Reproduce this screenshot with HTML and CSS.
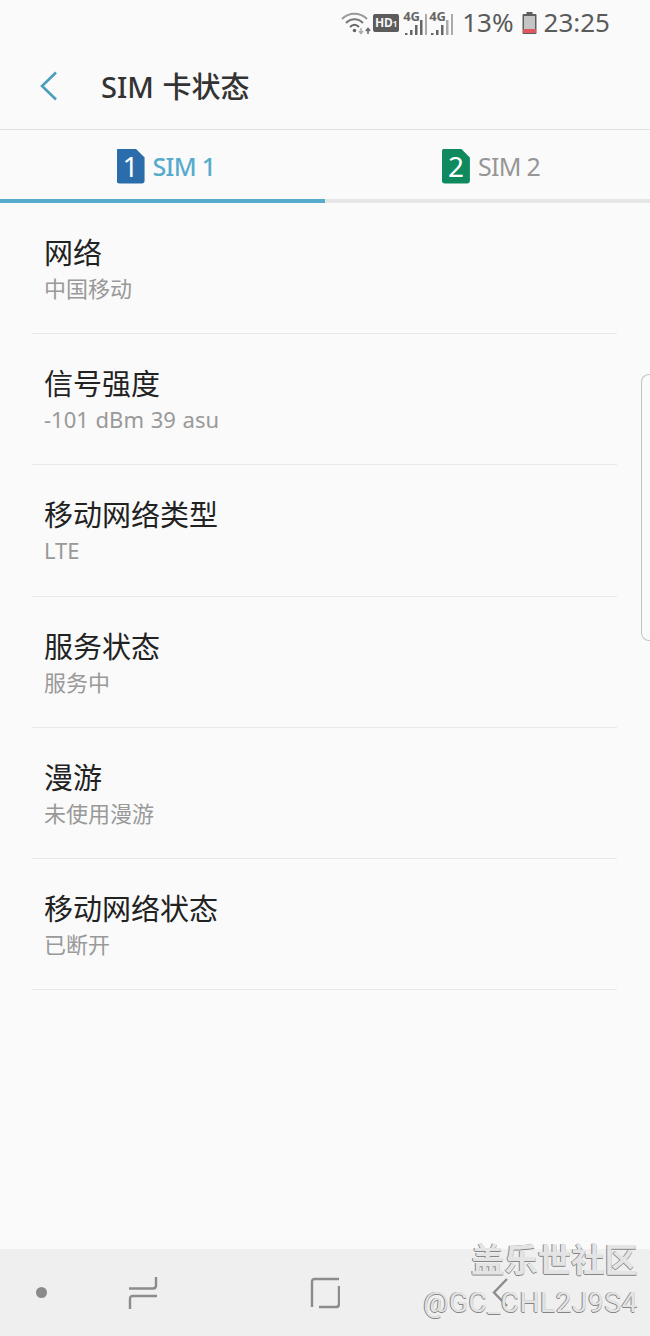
FILE: index.html
```html
<!DOCTYPE html>
<html lang="zh-CN">
<head>
  <meta charset="UTF-8">
  <title>SIM 卡状态</title>
  <link rel="stylesheet" href="styles.css">
</head>
<body>
  <div class="phone">

    <!-- Status bar -->
    <div class="status-bar">
      <svg class="wifi" width="32" height="24" viewBox="0 0 32 24" fill="none">
        <path d="M1 8 C8 1 19 1 26 8" stroke="#999" stroke-width="2"/>
        <path d="M5 12 C10 7 17 7 22 12" stroke="#777" stroke-width="2"/>
        <path d="M9 16 C12 13 15 13 18 16" stroke="#666" stroke-width="2"/>
        <circle cx="13.5" cy="19.5" r="1.8" fill="#666"/>
        <path d="M20 17v5m-2-2l2 2.5 2-2.5" stroke="#aaa" stroke-width="1.5"/>
        <path d="M27 23v-5m-2.2 2l2.2-2.5 2.2 2.5" stroke="#666" stroke-width="1.5"/>
      </svg>
      <span class="hd">HD<small>1</small></span>
      <div class="signal">
        <span class="net">4G</span>
        <svg width="24" height="22" viewBox="0 0 24 22"><path d="M1 20h2.500v2H1zM6 17h2.500v5H6zM11 12h2.500v10H11zM16 7h2.500v15H16z" fill="#666"/><path d="M21 1h2v21h-2z" fill="#aaa"/></svg>
      </div>
      <div class="signal">
        <span class="net">4G</span>
        <svg width="24" height="22" viewBox="0 0 24 22"><path d="M1 20h2.500v2H1zM6 17h2.500v5H6zM11 12h2.500v10H11z" fill="#666"/><path d="M16 7h2.500v15H16zM21 1h2v21h-2z" fill="#aaa"/></svg>
      </div>
      <span class="percent">13%</span>
      <svg class="battery" width="15" height="22" viewBox="0 0 15 22">
        <path d="M4.500 0h6v2h3a1 1 0 0 1 1 1v18a1 1 0 0 1-1 1h-12a1 1 0 0 1-1-1V3a1 1 0 0 1 1-1h3z" fill="#5e5e5e"/>
        <rect x="2" y="4" width="11" height="16" fill="#c4c4c4"/>
        <rect x="1" y="17" width="13" height="4" fill="#e0565f"/>
      </svg>
      <span class="clock">23:25</span>
    </div>

    <!-- App bar -->
    <header class="app-bar">
      <svg class="back" width="20" height="32" viewBox="0 0 20 32" fill="none">
        <path d="M17 2.500 L3 16 L17 29.500" stroke="#4a9dbb" stroke-width="2.600"/>
      </svg>
      <h1>SIM 卡状态</h1>
    </header>

    <!-- SIM tabs -->
    <nav class="tabs">
      <div class="tab active">
        <span class="sim-chip blue">1</span>
        <span>SIM 1</span>
      </div>
      <div class="tab">
        <span class="sim-chip green">2</span>
        <span>SIM 2</span>
      </div>
    </nav>

    <!-- Status rows -->
    <main class="list">
      <div class="row"><div class="row-title">网络</div><div class="row-sub">中国移动</div></div>
      <div class="row"><div class="row-title">信号强度</div><div class="row-sub">-101 dBm 39 asu</div></div>
      <div class="row"><div class="row-title">移动网络类型</div><div class="row-sub">LTE</div></div>
      <div class="row"><div class="row-title">服务状态</div><div class="row-sub">服务中</div></div>
      <div class="row"><div class="row-title">漫游</div><div class="row-sub">未使用漫游</div></div>
      <div class="row"><div class="row-title">移动网络状态</div><div class="row-sub">已断开</div></div>
    </main>

    <!-- Navigation bar -->
    <footer class="nav-bar">
      <div class="nav-slot dot-slot"><span class="dot"></span></div>
      <div class="nav-slot recents-slot">
        <svg width="30" height="34" viewBox="0 0 30 34" fill="none" stroke="#8c8c8c" stroke-width="2.400">
          <path d="M1 12.500h24q3 0 3-3V1"/>
          <path d="M29 20H5q-3 0-3 3v10"/>
        </svg>
      </div>
      <div class="nav-slot home-slot">
        <svg width="30" height="32" viewBox="0 0 30 32" fill="none" stroke="#8c8c8c" stroke-width="2.400">
          <path d="M29 2H5Q2 2 2 5v25"/>
          <path d="M29 9v18q0 3-3 3H9"/>
        </svg>
      </div>
      <div class="nav-slot back-slot">
        <svg width="16" height="29" viewBox="0 0 16 29" fill="none" stroke="#8c8c8c" stroke-width="2.400">
          <path d="M15 1 L2 14.500 L15 28"/>
        </svg>
      </div>
    </footer>

    <!-- Edge panel handle -->
    <div class="edge-handle"></div>

    <!-- Watermark -->
    <div class="watermark">
      <div class="wm-name">盖乐世社区</div>
      <div class="wm-user">@GC_CHL2J9S4</div>
    </div>
  </div>
</body>
</html>
```

FILE: styles.css
```css
* {
  box-sizing: border-box;
}

html, body {
  margin: 0;
  padding: 0;
}

body {
  font-family: "Noto Sans", "Noto Sans CJK SC", sans-serif;
  background: #fafafa;
}

.phone {
  position: relative;
  width: 650px;
  height: 1336px;
  display: flex;
  flex-direction: column;
  overflow: hidden;
  background: #fafafa;
}

/* status bar */
.status-bar {
  height: 45px;
  padding: 0 40px 0 0;
  display: flex;
  justify-content: flex-end;
  align-items: center;
  color: #5a5a5a;
}

.hd {
  width: 26px;
  height: 18px;
  margin-right: 4px;
  background: #5c5c5c;
  color: #f5f5f5;
  border-radius: 2px;
  font-size: 12px;
  font-weight: 700;
  line-height: 18px;
  text-align: center;
}

.hd small {
  font-size: 8px;
}

.signal {
  position: relative;
  width: 25px;
  height: 24px;
  margin-right: 1px;
}

.signal svg {
  position: absolute;
  right: 0;
  bottom: 0;
}

.net {
  position: absolute;
  left: 0;
  top: -2px;
  font-size: 13px;
  line-height: 14px;
  font-weight: 700;
  color: #666;
}

.percent {
  margin: 0 8px 2px 7px;
  font-size: 26px;
}

.battery {
  margin-right: 7px;
}

.clock {
  margin-bottom: 2px;
  font-size: 26px;
}

/* app bar */
.app-bar {
  height: 85px;
  padding: 0 0 2px 39px;
  display: flex;
  align-items: center;
  border-bottom: 1px solid #e3e3e3;
}

.back {
  margin-right: 42px;
}

.app-bar h1 {
  margin: 0 0 2px;
  font-size: 29px;
  font-weight: 500;
  word-spacing: 1px;
  color: #333;
}

/* tabs */
.tabs {
  height: 73px;
  display: flex;
}

.tab {
  flex: 1;
  display: flex;
  justify-content: center;
  align-items: center;
  gap: 8px;
  padding: 3px 0 0 7px;
  font-size: 25px;
  letter-spacing: -0.7px;
  color: #969696;
  border-bottom: 4px solid #e6e6e6;
}

.tab.active {
  color: #56abcd;
  font-weight: 500;
  border-bottom-color: #56abcd;
}

.sim-chip {
  width: 28px;
  height: 35px;
  color: #fff;
  font-size: 28px;
  font-weight: 400;
  line-height: 35px;
  text-align: center;
  letter-spacing: 0;
  clip-path: path("M3 0H19L28 9V32a3 3 0 0 1-3 3H3a3 3 0 0 1-3-3V3a3 3 0 0 1 3-3Z");
}

.sim-chip.blue {
  background: #2b6cab;
}

.sim-chip.green {
  background: #0f8a5f;
}

/* list */
.list {
  flex: 1;
  padding: 0 33px 0 32px;
}

.row {
  height: 131.2px;
  padding: 30px 0 0 12px;
  border-bottom: 1px solid #e8e8e8;
}

.row-title {
  font-size: 29px;
  line-height: 40px;
  color: #222;
}

.row-sub {
  margin-top: -1px;
  font-size: 22px;
  line-height: 32px;
  word-spacing: 1px;
  color: #999;
}

/* bottom nav */
.nav-bar {
  height: 87px;
  display: flex;
  align-items: center;
  background: #efefef;
}

.nav-slot {
  display: flex;
  justify-content: center;
}

.dot-slot {
  width: 82px;
}

.recents-slot {
  width: 122px;
}

.home-slot {
  width: 242px;
}

.back-slot {
  width: 108px;
}

.dot {
  width: 11px;
  height: 11px;
  border-radius: 50%;
  background: #8a8a8a;
}

/* overlays */
.edge-handle {
  position: absolute;
  right: 0;
  top: 374px;
  width: 9px;
  height: 267px;
  border: 1px solid #c4c4c4;
  border-right: none;
  border-radius: 8px 0 0 8px;
}

.watermark {
  position: absolute;
  right: 12px;
  top: 1238px;
  font-family: Roboto, "Noto Sans CJK SC", sans-serif;
  text-align: right;
  color: #e4e4e4;
  text-shadow: -1px 0 0 #858585, 0 1px 0 #858585;
}

.wm-name {
  font-size: 33.4px;
  line-height: 45px;
  font-weight: 700;
}

.wm-user {
  font-size: 28px;
  line-height: 40px;
  letter-spacing: 0.6px;
}
```
